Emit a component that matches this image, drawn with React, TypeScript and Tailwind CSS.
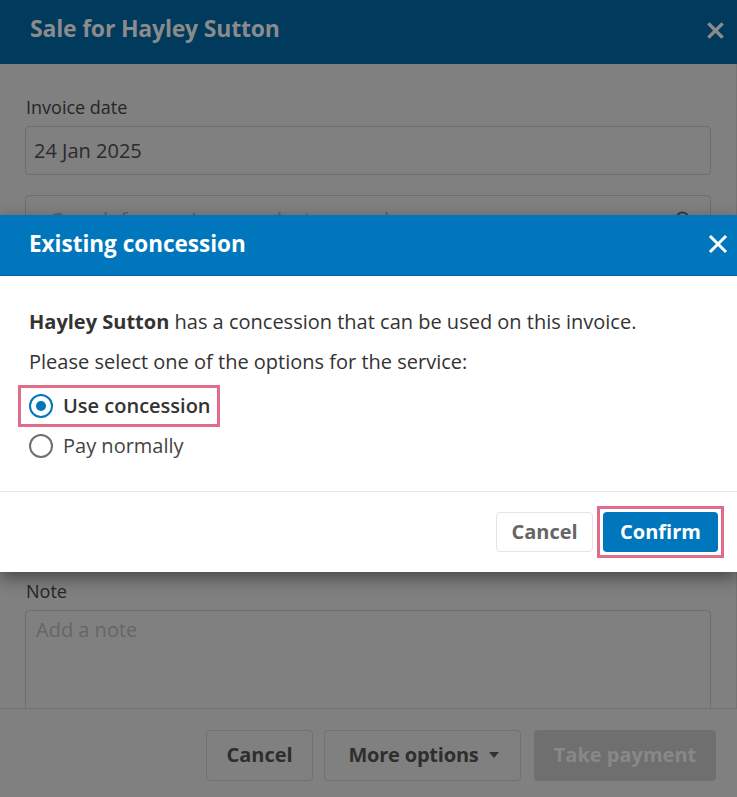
import React, { useState } from 'react';

const font = { fontFamily: '"Open Sans", "Liberation Sans", sans-serif' };

function CloseIcon({ className, stroke = 3 }: { className?: string; stroke?: number }) {
  return (
    <svg viewBox="0 0 20 20" className={className} fill="none" stroke="currentColor" strokeWidth={stroke} strokeLinecap="square">
      <path d="M3 3 L17 17 M17 3 L3 17" />
    </svg>
  );
}

function Radio({ checked }: { checked: boolean }) {
  return checked ? (
    <span className="flex h-6 w-6 items-center justify-center rounded-full border-[2.5px] border-[#0077bd]">
      <span className="h-[10px] w-[10px] rounded-full bg-[#0077bd]" />
    </span>
  ) : (
    <span className="h-6 w-6 rounded-full border-2 border-[#6f6f6f]" />
  );
}

export default function App() {
  const [option, setOption] = useState<'concession' | 'normal'>('concession');

  return (
    <div style={font} className="relative flex h-[797px] w-full flex-col overflow-hidden bg-[#808080]">
      {/* dimmed page behind the dialog */}
      <div className="flex h-[64px] shrink-0 items-center justify-between bg-[#003a5d] pb-[7px] pl-[30px] pr-[13px]">
        <h1 className="text-[23px] font-bold tracking-[-0.2px] text-[#8b8b8b]">Sale for Hayley Sutton</h1>
        <CloseIcon className="mt-[3px] h-[17px] w-[17px] text-[#8b8b8b]" stroke={4} />
      </div>

      <div className="flex-1 overflow-hidden border-r border-[#737373] px-[25px] pt-[32px]">
        <label className="block h-[22px] pl-px text-[18px] leading-[22px] text-[#262626]">Invoice date</label>
        <div className="mt-2 flex h-[49px] items-center rounded border border-[#6e6e6e] px-2 text-[20px] text-[#2b2b2b]">
          24 Jan 2025
        </div>
        <div className="mt-5 flex h-[49px] items-center justify-between rounded border border-[#6e6e6e] pl-[26px] pr-[16px] text-[20px] text-[#5e5e5e]">
          <span>Search for services, products or packages</span>
          <svg viewBox="0 0 20 20" className="h-5 w-5 text-[#3a3a3a]" fill="none" stroke="currentColor" strokeWidth={2}>
            <circle cx="8.5" cy="8.5" r="6" />
            <path d="M13 13 L18 18" />
          </svg>
        </div>
        <div className="h-[336px]" />
        <label className="block h-[22px] pl-px text-[18px] leading-[22px] text-[#262626]">Note</label>
        <div className="mt-2 h-[140px] rounded border border-[#6e6e6e] px-[10px] pt-[4px] text-[20px] text-[#666]">
          Add a note
        </div>
      </div>

      <div className="flex h-[89px] shrink-0 items-center justify-end gap-[11px] border-t border-[#707070] pr-[21px] pb-[8px] pt-[12px]">
        <button className="h-[51px] w-[107px] rounded border border-[#717171] text-[20px] font-bold text-[#2e2e2e]">Cancel</button>
        <button className="flex h-[51px] w-[197px] items-center justify-center gap-[10px] rounded border border-[#717171] pl-[2px] text-[20px] font-bold tracking-[-0.2px] text-[#2e2e2e]">
          More options
          <svg viewBox="0 0 10 6" className="h-[6px] w-[10px] fill-[#333]"><path d="M0 0 H10 L5 6 Z" /></svg>
        </button>
        <button className="ml-[2px] h-[51px] w-[182px] rounded bg-[#6f6f6f] text-[20px] font-bold text-[#888]">Take payment</button>
      </div>

      {/* dialog */}
      <div className="absolute left-0 right-0 top-[215px] bg-white shadow-[0_6px_16px_rgba(0,0,0,0.45)]">
        <div className="flex h-[61px] items-center justify-between border-b border-[#0062a0] bg-[#0077bd] pb-[2px] pl-[29px] pr-[9px]">
          <h2 className="text-[22.5px] font-bold text-white">Existing concession</h2>
          <CloseIcon className="h-5 w-5 text-white" stroke={3} />
        </div>

        <div className="px-[29px] pt-[33px] pb-[26px] text-[20px] text-[#333]">
          <p className="leading-[26px]">
            <span className="font-bold">Hayley Sutton</span> has a concession that can be used on this invoice.
          </p>
          <p className="mt-[14px] leading-[26px]">Please select one of the options for the service:</p>

          <div className="mt-[10px] flex flex-col items-start">
            <button
              onClick={() => setOption('concession')}
              className="-ml-[11px] flex h-[42px] items-center gap-[10px] border-[3px] border-[#e06b8b] pl-[8px] pr-[6px]"
            >
              <Radio checked={option === 'concession'} />
              <span className="font-semibold text-[#333]">Use concession</span>
            </button>
            <button onClick={() => setOption('normal')} className="flex h-[38px] items-center gap-[10px] pl-0">
              <Radio checked={option === 'normal'} />
              <span className="text-[#444]">Pay normally</span>
            </button>
          </div>
        </div>

        <div className="flex items-center justify-end gap-[4px] border-t border-[#e6e6e6] pr-[13px] pb-[14px] pt-[14px]">
          <button className="h-[40px] w-[97px] rounded border border-[#e5e5e5] text-[20px] font-bold text-[#666]">Cancel</button>
          <div className="border-[3px] border-[#e06b8b] p-[3px]">
            <button className="block h-[40px] w-[115px] rounded bg-[#0077bd] text-[20px] font-bold text-white">Confirm</button>
          </div>
        </div>
      </div>
    </div>
  );
}
